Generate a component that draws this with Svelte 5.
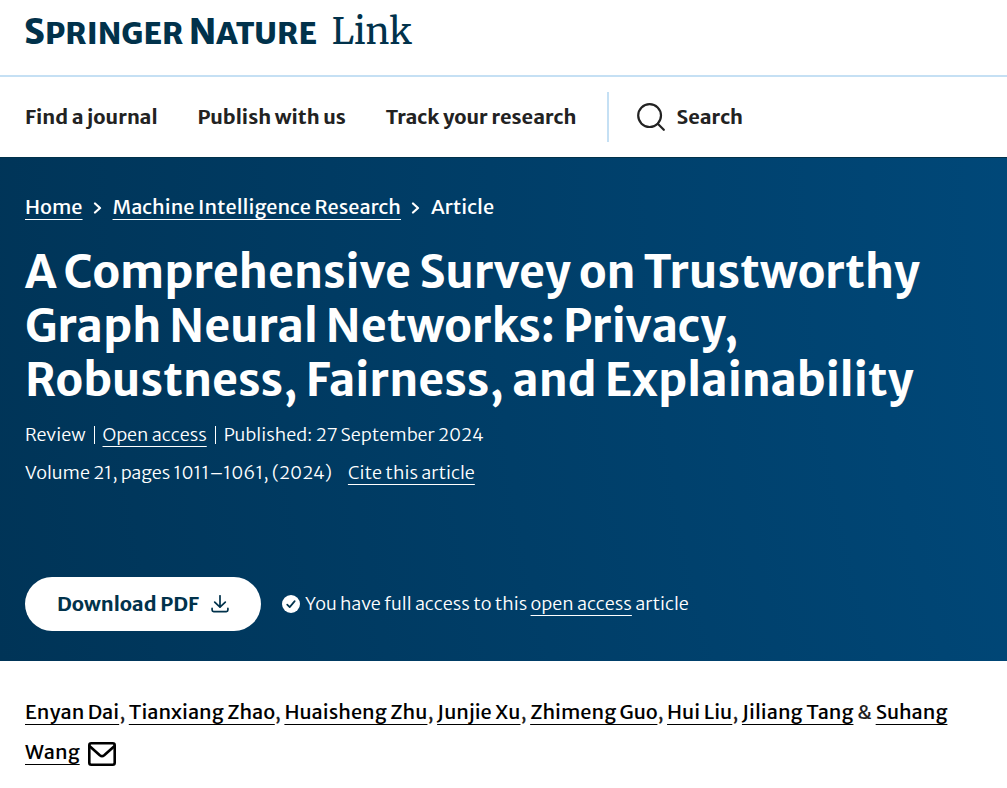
<script>
  const navLinks = ['Find a journal', 'Publish with us', 'Track your research'];
  const authors = [
    'Enyan Dai',
    'Tianxiang Zhao',
    'Huaisheng Zhu',
    'Junjie Xu',
    'Zhimeng Guo',
    'Hui Liu',
    'Jiliang Tang'
  ];
</script>

{#snippet chevron()}
  <svg class="chevron" viewBox="0 0 10 13" aria-hidden="true">
    <path d="M2 2.500 7 7 2 11.500" />
  </svg>
{/snippet}

<header>
  <div class="brand">
    <a class="logo" href="/">
      <span class="publisher"><b>S</b>PRINGER <b>N</b>ATURE</span>
      <span class="product">Link</span>
    </a>
  </div>
  <nav class="menu">
    {#each navLinks as label}
      <a href="/">{label}</a>
    {/each}
    <a class="search" href="/">
      <svg viewBox="0 0 28 28" aria-hidden="true">
        <circle cx="12.6" cy="12.6" r="11.4" />
        <path d="m20.8 20.8 6 6" />
      </svg>
      Search
    </a>
  </nav>
</header>

<main>
  <section class="hero">
    <nav class="crumbs">
      <a href="/">Home</a>
      {@render chevron()}
      <a href="/">Machine Intelligence Research</a>
      {@render chevron()}
      <span>Article</span>
    </nav>
    <h1>A Comprehensive Survey on Trustworthy Graph Neural Networks: Privacy, Robustness, Fairness, and Explainability</h1>
    <ul class="meta">
      <li>Review</li>
      <li><a href="/">Open access</a></li>
      <li>Published: 27 September 2024</li>
    </ul>
    <div class="issue">
      <span>Volume 21, pages 1011–1061, (2024)</span>
      <a href="/">Cite this article</a>
    </div>
    <div class="access">
      <a class="download" href="/">
        Download PDF
        <svg viewBox="0 0 18 18" aria-hidden="true">
          <path d="M9 .8v11.4M3.7 7.1 9 12.2l5.300-5.100M1.100 13.400v1.600q0 1.600 1.600 1.600h12.600q1.600 0 1.600-1.600v-1.600" />
        </svg>
      </a>
      <p>
        <svg viewBox="0 0 18 18" aria-hidden="true">
          <circle cx="9" cy="9" r="9" />
          <path d="m5.200 9.600 2.500 2.500 5-6" />
        </svg>
        <span>You have full access to this <a href="/">open access</a> article</span>
      </p>
    </div>
  </section>

  <section class="authors">
    {#each authors as name, i}<a href="/">{name}</a>{i < authors.length - 1 ? ', ' : ' & '}{/each}<a href="/">Suhang Wang</a>
    <svg viewBox="0 0 28 24" aria-hidden="true">
      <rect x="1.300" y="1.300" width="25.400" height="21.400" rx="2" />
      <path d="m2 4.500 9.800 8.800q2.200 1.800 4.400 0L26 4.500" />
    </svg>
  </section>
</main>

<style>
  :global(body) {
    margin: 0;
    background: #fff;
    color: #222;
    font-family: 'Merriweather Sans', Lato, 'Open Sans', sans-serif;
    font-size: 20px;
  }

  a {
    color: inherit;
  }

  svg {
    flex: none;
    fill: none;
    stroke: currentColor;
    stroke-linecap: round;
    stroke-linejoin: round;
  }

  .brand {
    height: 75px;
    padding: 0 24px;
    border-bottom: 2px solid #c5e0f4;
  }

  .logo {
    display: inline-flex;
    align-items: baseline;
    gap: 15px;
    padding-top: 8px;
    color: #01324b;
    line-height: 48px;
    text-decoration: none;
  }

  .publisher {
    font-size: 30px;
    font-weight: 800;
  }

  .publisher b {
    font-size: 35px;
    font-weight: 800;
  }

  .product {
    font-family: Merriweather, 'DejaVu Serif', serif;
    font-size: 36px;
    font-weight: 400;
  }

  .menu {
    display: flex;
    align-items: center;
    gap: 40px;
    height: 80px;
    padding: 0 25px;
    font-size: 20px;
    font-weight: 700;
    line-height: 24px;
  }

  .menu a {
    text-decoration: none;
  }

  .menu .search {
    display: flex;
    align-items: center;
    gap: 11px;
    height: 50px;
    margin-left: -9px;
    padding-left: 28px;
    border-left: 2px solid #c5e0f4;
  }

  .search svg {
    width: 28px;
    height: 28px;
    stroke-width: 2.200;
  }

  .hero {
    padding: 34px 25px 30px;
    border-top: 1px solid #01324b;
    background: radial-gradient(circle at 250% 0, #004879 58%, #003457);
    color: #fff;
  }

  .hero a,
  .authors a {
    text-decoration: underline 1px;
    text-underline-offset: 5px;
    text-decoration-skip-ink: none;
  }

  .crumbs {
    display: flex;
    align-items: center;
    gap: 10px;
    font-weight: 500;
    font-size: 20px;
    line-height: 30px;
  }

  .chevron {
    width: 10px;
    height: 13px;
    stroke-width: 2.200;
  }

  h1 {
    margin: 23px 0 19px;
    font-size: 45px;
    font-weight: 700;
    line-height: 54px;
  }

  .meta {
    display: flex;
    align-items: center;
    margin: 0;
    padding: 0;
    font-size: 18px;
    font-weight: 300;
    line-height: 18px;
    list-style: none;
  }

  .meta li + li {
    margin-left: 8px;
    padding-left: 8px;
    border-left: 1px solid #fff;
  }

  .issue {
    display: flex;
    gap: 16px;
    margin-top: 14px;
    font-size: 18px;
    font-weight: 300;
    line-height: 30px;
  }

  .access {
    display: flex;
    align-items: center;
    gap: 21px;
    margin-top: 89px;
  }

  .access .download {
    display: flex;
    align-items: center;
    gap: 12px;
    padding: 0 32px;
    border-radius: 27px;
    background: #fff;
    color: #01324b;
    font-size: 20px;
    font-weight: 700;
    line-height: 54px;
    text-decoration: none;
  }

  .access svg {
    width: 18px;
    height: 18px;
    stroke-width: 1.700;
  }

  .access p {
    display: flex;
    align-items: center;
    gap: 5px;
    margin: 0;
    font-size: 18px;
    font-weight: 300;
    line-height: 24px;
  }

  p circle {
    fill: #fff;
    stroke: none;
  }

  p path {
    stroke: #01324b;
  }

  .authors {
    padding: 31px 25px;
    font-size: 20px;
    line-height: 40px;
  }

  .authors a {
    color: #000;
  }

  .authors svg {
    width: 28px;
    height: 24px;
    margin-left: 5px;
    color: #000;
    stroke-width: 2.600;
    vertical-align: -7px;
  }
</style>
